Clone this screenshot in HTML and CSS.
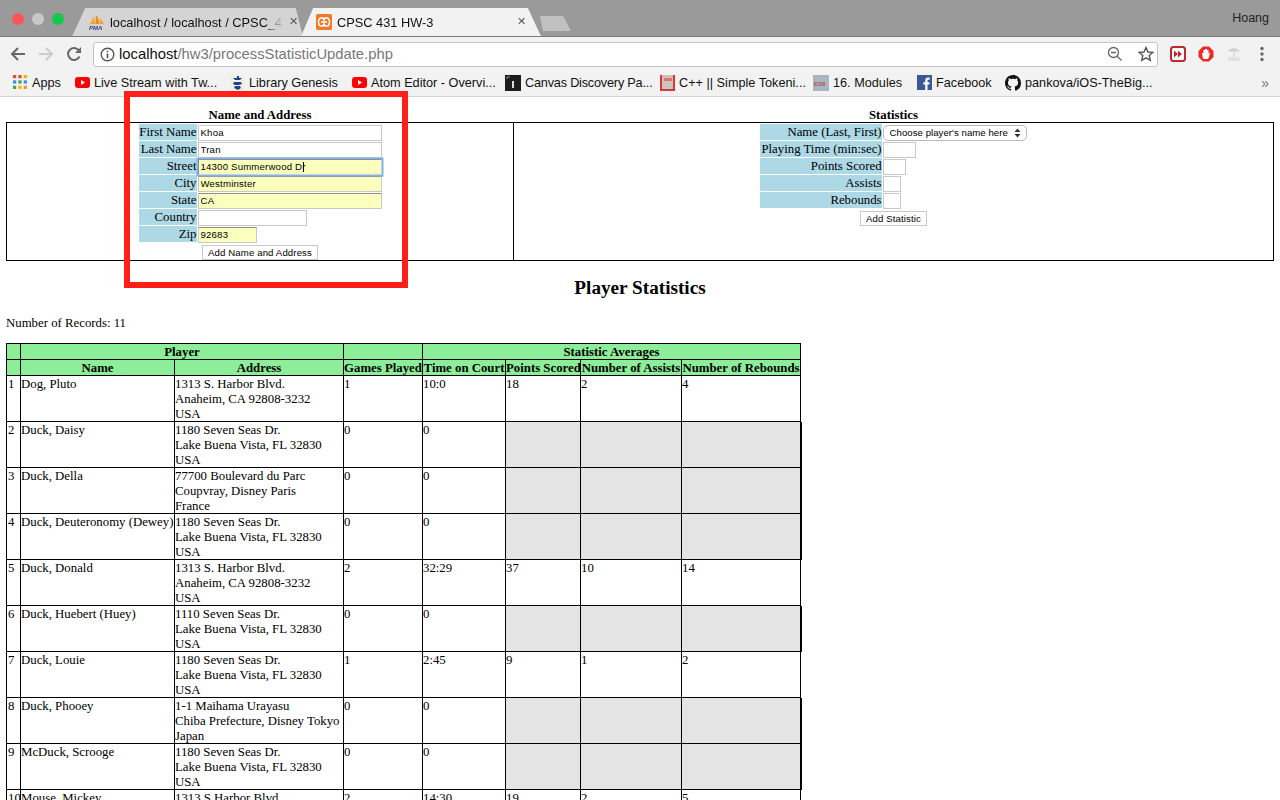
FILE: index.html
```html
<!doctype html>
<html lang="en">
    <head>
        <meta charset="UTF-8" />
        <title>CPSC 431 HW-3</title>
        <link rel="stylesheet" href="styles.css">
    </head>
    <body>
        <div class="app">
            <!-- browser tabs -->
            <div class="tabstrip">
                <div class="lights">
                    <span class="light red"></span>
                    <span class="light grey"></span>
                    <span class="light green"></span>
                </div>
                <div class="tab tab-back">
                    <span class="tab-bg"></span>
                    <svg class="tab-icon" width="16" height="17" viewBox="0 0 16 17">
                        <path d="M1 10 C3 7 4 4 5 2 L6 10Z" fill="#f6a623" />
                        <path d="M6.5 10 L7 1 C9 3 10 6 10.5 10Z" fill="#f08a1d" />
                        <path d="M11 10 C11 7 11 5 11 4 C13 6 14 8 15 10Z" fill="#f6a623" />
                        <text x="0" y="16" class="pma">PMA</text>
                    </svg>
                    <span class="tab-title fade">localhost / localhost / CPSC_43</span>
                    <span class="tab-close">✕</span>
                </div>
                <div class="tab tab-active">
                    <span class="tab-bg"></span>
                    <svg class="tab-icon" width="16" height="16" viewBox="0 0 16 16">
                        <rect width="16" height="16" rx="1.5" fill="#ee7b2c" />
                        <path d="M4 4 H7 L8 6 L9 4 H12 M4 12 H7 L8 10 L9 12 H12 M4 4 C2 6 2 10 4 12 M12 4 C14 6 14 10 12 12 M5 8 H11" fill="none" stroke="#fff" stroke-width="1.5" />
                    </svg>
                    <span class="tab-title">CPSC 431 HW-3</span>
                    <span class="tab-close">✕</span>
                </div>
                <div class="tab-new"></div>
                <span class="user">Hoang</span>
            </div>

            <!-- address bar -->
            <div class="toolbar">
                <svg class="tool" width="16" height="16" viewBox="0 0 16 16">
                    <path d="M15 8 H2 M8 2 L2 8 L8 14" fill="none" stroke="#666" stroke-width="2" />
                </svg>
                <svg class="tool" width="16" height="16" viewBox="0 0 16 16">
                    <path d="M1 8 H14 M8 2 L14 8 L8 14" fill="none" stroke="#ccc" stroke-width="2" />
                </svg>
                <svg class="tool" width="16" height="16" viewBox="0 0 16 16">
                    <path d="M13.5 10.5 A6 6 0 1 1 13 4.5" fill="none" stroke="#666" stroke-width="2" />
                    <path d="M15 1 V7 H9Z" fill="#666" />
                </svg>
                <div class="omnibox">
                    <svg width="15" height="15" viewBox="0 0 15 15">
                        <circle cx="7.5" cy="7.5" r="6.3" fill="none" stroke="#555" stroke-width="1.4" />
                        <path d="M7.5 6.5 V11.2 M7.5 3.8 V5.3" stroke="#555" stroke-width="1.6" />
                    </svg>
                    <span class="url"><b>localhost</b>/hw3/processStatisticUpdate.php</span>
                    <svg class="omni-zoom" width="16" height="16" viewBox="0 0 16 16">
                        <circle cx="6.5" cy="6.5" r="5" fill="none" stroke="#666" stroke-width="1.3" />
                        <path d="M10.2 10.2 L14.5 14.5 M4 6.5 H9" stroke="#666" stroke-width="1.3" />
                    </svg>
                    <svg class="omni-star" width="16" height="16" viewBox="0 0 16 16">
                        <path d="M8 1.5 L10 6 L14.8 6.4 L11.2 9.6 L12.3 14.4 L8 11.8 L3.7 14.4 L4.8 9.6 L1.2 6.4 L6 6Z" fill="none" stroke="#555" stroke-width="1.4" />
                    </svg>
                </div>
                <div class="extensions">
                    <svg width="16" height="16" viewBox="0 0 16 16">
                        <rect x="1" y="1" width="14" height="14" rx="2.5" fill="#fff" stroke="#c0282d" stroke-width="2" />
                        <path d="M4 4.5 L8 8 L4 11.5Z M8 4.5 L12 8 L8 11.5Z" fill="#c0282d" />
                    </svg>
                    <svg width="16" height="16" viewBox="0 0 16 16">
                        <path d="M5 0.5 H11 L15.5 5 V11 L11 15.5 H5 L0.5 11 V5Z" fill="#ee2a24" />
                        <path d="M5 13 L4 7 H5.5 V4 H7 V3 H9 V4 H10.5 V7.5 L12 6.5 L11 11 L10 13Z" fill="#fff" />
                    </svg>
                    <svg width="16" height="16" viewBox="0 0 16 16">
                        <path d="M2 6 C3 1 12 1 14 6 C12 5 11 5 10 6 C9 5 7 5 6 6 C5 5 4 5 2 6Z" fill="#cfcfcf" />
                        <path d="M8 6 V11" stroke="#d4d4d4" stroke-width="1.5" />
                        <rect x="2" y="11" width="12" height="4" fill="#e2e2e2" />
                    </svg>
                    <svg width="16" height="16" viewBox="0 0 16 16">
                        <circle cx="8" cy="2.5" r="1.7" fill="#666" />
                        <circle cx="8" cy="8" r="1.7" fill="#666" />
                        <circle cx="8" cy="13.5" r="1.7" fill="#666" />
                    </svg>
                </div>
            </div>

            <!-- bookmarks -->
            <div class="bookmarks">
                <a class="bm bm-apps">
                    <svg width="15" height="15" viewBox="0 0 14 14">
                        <rect x="0" y="0" width="3" height="3" fill="#e8453c" />
                        <rect x="5" y="0" width="3" height="3" fill="#e8453c" />
                        <rect x="10" y="0" width="3" height="3" fill="#f4b400" />
                        <rect x="0" y="5" width="3" height="3" fill="#4285f4" />
                        <rect x="5" y="5" width="3" height="3" fill="#34a853" />
                        <rect x="10" y="5" width="3" height="3" fill="#4285f4" />
                        <rect x="0" y="10" width="3" height="3" fill="#34a853" />
                        <rect x="5" y="10" width="3" height="3" fill="#f4b400" />
                        <rect x="10" y="10" width="3" height="3" fill="#f4902c" />
                    </svg>
                    Apps
                </a>
                <a class="bm bm-live">
                    <svg width="15" height="15" viewBox="0 0 15 15">
                        <rect x="0" y="2" width="15" height="11" rx="3" fill="#f00" />
                        <path d="M6 5 L10 7.5 L6 10Z" fill="#fff" />
                    </svg>
                    Live Stream with Tw...
                </a>
                <a class="bm bm-lib">
                    <svg width="15" height="16" viewBox="0 0 15 16">
                        <rect width="15" height="16" fill="#f1efe2" />
                        <path d="M7 1 H9 V3 H12 L10 5 H5 L3 3 H7Z M4 7 H11 L12 9 L9 10 H5 L3 9Z M5 11 H10 L11 13 L8 15 L4 13Z" fill="#23408e" />
                    </svg>
                    Library Genesis
                </a>
                <a class="bm bm-atom">
                    <svg width="15" height="15" viewBox="0 0 15 15">
                        <rect x="0" y="2" width="15" height="11" rx="3" fill="#f00" />
                        <path d="M6 5 L10 7.5 L6 10Z" fill="#fff" />
                    </svg>
                    Atom Editor - Overvi...
                </a>
                <a class="bm bm-canvas">
                    <svg width="16" height="16" viewBox="0 0 16 16">
                        <rect width="16" height="16" fill="#1c1c1c" />
                        <path d="M2 4 V2 H5" fill="none" stroke="#6a6" stroke-width="1" />
                        <rect x="7" y="6" width="2" height="7" fill="#ddd" />
                    </svg>
                    Canvas Discovery Pa...
                </a>
                <a class="bm bm-cpp">
                    <svg width="15" height="16" viewBox="0 0 15 16">
                        <rect width="15" height="16" fill="#c9c4b8" />
                        <rect width="2" height="16" fill="#d9363b" />
                        <rect x="13" width="2" height="16" fill="#d9363b" />
                        <rect y="14" width="15" height="2" fill="#d9363b" />
                        <rect x="4" y="3" width="8" height="3" fill="#ee6c6c" />
                    </svg>
                    C++ || Simple Tokeni...
                </a>
                <a class="bm bm-es">
                    <svg width="16" height="16" viewBox="0 0 16 16">
                        <rect width="16" height="16" fill="#a9b5c0" />
                        <text x="1" y="11" class="es">ES6</text>
                    </svg>
                    16. Modules
                </a>
                <a class="bm bm-fb">
                    <svg width="15" height="15" viewBox="0 0 15 15">
                        <rect width="15" height="15" fill="#3b5998" />
                        <path d="M10.5 15 V9.5 H12.3 L12.6 7.2 H10.5 V5.8 C10.5 5.1 10.8 4.7 11.6 4.7 H12.7 V2.7 C12.3 2.6 11.7 2.6 11 2.6 C9.300 2.6 8.200 3.600 8.200 5.500 V7.200 H6.300 V9.500 H8.200 V15Z" fill="#fff" />
                    </svg>
                    Facebook
                </a>
                <a class="bm bm-gh">
                    <svg width="16" height="16" viewBox="0 0 16 16">
                        <path fill="#111" d="M8 0C3.58 0 0 3.58 0 8c0 3.54 2.29 6.53 5.47 7.59.4.07.55-.17.55-.38 0-.19-.01-.82-.01-1.49-2.010.37-2.530-.49-2.690-.94-.09-.23-.48-.94-.82-1.130-.28-.15-.68-.52-.01-.53.63-.01 1.080.58 1.230.82.72 1.210 1.870.87 2.330.66.07-.52.28-.87.51-1.070-1.780-.2-3.640-.89-3.640-3.950 0-.87.31-1.590.82-2.150-.08-.2-.36-1.020.08-2.120 0 0 .67-.21 2.200.82.64-.18 1.320-.27 2-.27s1.360.09 2 .27c1.530-1.040 2.200-.82 2.200-.82.44 1.100.16 1.920.08 2.120.51.56.82 1.270.82 2.150 0 3.070-1.870 3.750-3.650 3.950.29.25.54.73.54 1.480 0 1.070-.01 1.930-.01 2.200 0 .21.15.46.55.38A8.013 8.013 0 0016 8c0-4.420-3.580-8-8-8z" />
                    </svg>
                    pankova/iOS-TheBig...
                </a>
                <span class="bm-more">»</span>
            </div>

            <!-- the page itself -->
            <div class="page">
                <table class="forms">
                    <colgroup>
                        <col class="forms-left" />
                        <col class="forms-right" />
                    </colgroup>
                    <tr>
                        <th>Name and Address</th>
                        <th>Statistics</th>
                    </tr>
                    <tr>
                        <td>
                            <table class="fields fields-name">
                                <tr>
                                    <td class="label">First Name</td>
                                    <td><input class="w-long" type="text" value="Khoa" /></td>
                                </tr>
                                <tr>
                                    <td class="label">Last Name</td>
                                    <td><input class="w-long" type="text" value="Tran" /></td>
                                </tr>
                                <tr>
                                    <td class="label">Street</td>
                                    <td>
                                        <div class="caret-wrap">
                                            <input class="w-long filled focused" type="text" value="14300 Summerwood Dr" />
                                            <span class="caret"></span>
                                        </div>
                                    </td>
                                </tr>
                                <tr>
                                    <td class="label">City</td>
                                    <td><input class="w-long filled" type="text" value="Westminster" /></td>
                                </tr>
                                <tr>
                                    <td class="label">State</td>
                                    <td><input class="w-long filled" type="text" value="CA" /></td>
                                </tr>
                                <tr>
                                    <td class="label">Country</td>
                                    <td><input class="w-mid" type="text" /></td>
                                </tr>
                                <tr>
                                    <td class="label">Zip</td>
                                    <td><input class="w-zip filled" type="text" value="92683" /></td>
                                </tr>
                                <tr>
                                    <td class="submit" colspan="2"><button type="button">Add Name and Address</button></td>
                                </tr>
                            </table>
                        </td>
                        <td>
                            <table class="fields">
                                <tr>
                                    <td class="label">Name (Last, First)</td>
                                    <td>
                                        <select>
                                            <option>Choose player's name here</option>
                                        </select>
                                    </td>
                                </tr>
                                <tr>
                                    <td class="label">Playing Time (min:sec)</td>
                                    <td><input class="w-time" type="text" /></td>
                                </tr>
                                <tr>
                                    <td class="label">Points Scored</td>
                                    <td><input class="w-points" type="text" /></td>
                                </tr>
                                <tr>
                                    <td class="label">Assists</td>
                                    <td><input class="w-small" type="text" /></td>
                                </tr>
                                <tr>
                                    <td class="label">Rebounds</td>
                                    <td><input class="w-small" type="text" /></td>
                                </tr>
                                <tr>
                                    <td class="submit" colspan="2"><button type="button">Add Statistic</button></td>
                                </tr>
                            </table>
                        </td>
                    </tr>
                </table>

                <h2>Player Statistics</h2>
                <p class="count">Number of Records: 11</p>

                <table class="players">
                    <colgroup>
                        <col class="c-num" />
                        <col class="c-name" />
                        <col class="c-addr" />
                        <col class="c-games" />
                        <col class="c-time" />
                        <col class="c-points" />
                        <col class="c-assists" />
                        <col class="c-rebounds" />
                    </colgroup>
                    <thead>
                        <tr>
                            <th></th>
                            <th colspan="2">Player</th>
                            <th></th>
                            <th colspan="4">Statistic Averages</th>
                        </tr>
                        <tr>
                            <th></th>
                            <th>Name</th>
                            <th>Address</th>
                            <th>Games Played</th>
                            <th>Time on Court</th>
                            <th>Points Scored</th>
                            <th>Number of Assists</th>
                            <th>Number of Rebounds</th>
                        </tr>
                    </thead>
                    <tbody>
                        <tr>
                            <td>1</td>
                            <td>Dog, Pluto</td>
                            <td>1313 S. Harbor Blvd.<br />Anaheim, CA 92808-3232<br />USA</td>
                            <td>1</td>
                            <td>10:0</td>
                            <td>18</td>
                            <td>2</td>
                            <td>4</td>
                        </tr>
                        <tr>
                            <td>2</td>
                            <td>Duck, Daisy</td>
                            <td>1180 Seven Seas Dr.<br />Lake Buena Vista, FL 32830<br />USA</td>
                            <td>0</td>
                            <td>0</td>
                            <td class="empty"></td>
                            <td class="empty"></td>
                            <td class="empty"></td>
                        </tr>
                        <tr>
                            <td>3</td>
                            <td>Duck, Della</td>
                            <td>77700 Boulevard du Parc<br />Coupvray, Disney Paris<br />France</td>
                            <td>0</td>
                            <td>0</td>
                            <td class="empty"></td>
                            <td class="empty"></td>
                            <td class="empty"></td>
                        </tr>
                        <tr>
                            <td>4</td>
                            <td>Duck, Deuteronomy (Dewey)</td>
                            <td>1180 Seven Seas Dr.<br />Lake Buena Vista, FL 32830<br />USA</td>
                            <td>0</td>
                            <td>0</td>
                            <td class="empty"></td>
                            <td class="empty"></td>
                            <td class="empty"></td>
                        </tr>
                        <tr>
                            <td>5</td>
                            <td>Duck, Donald</td>
                            <td>1313 S. Harbor Blvd.<br />Anaheim, CA 92808-3232<br />USA</td>
                            <td>2</td>
                            <td>32:29</td>
                            <td>37</td>
                            <td>10</td>
                            <td>14</td>
                        </tr>
                        <tr>
                            <td>6</td>
                            <td>Duck, Huebert (Huey)</td>
                            <td>1110 Seven Seas Dr.<br />Lake Buena Vista, FL 32830<br />USA</td>
                            <td>0</td>
                            <td>0</td>
                            <td class="empty"></td>
                            <td class="empty"></td>
                            <td class="empty"></td>
                        </tr>
                        <tr>
                            <td>7</td>
                            <td>Duck, Louie</td>
                            <td>1180 Seven Seas Dr.<br />Lake Buena Vista, FL 32830<br />USA</td>
                            <td>1</td>
                            <td>2:45</td>
                            <td>9</td>
                            <td>1</td>
                            <td>2</td>
                        </tr>
                        <tr>
                            <td>8</td>
                            <td>Duck, Phooey</td>
                            <td>1-1 Maihama Urayasu<br />Chiba Prefecture, Disney Tokyo<br />Japan</td>
                            <td>0</td>
                            <td>0</td>
                            <td class="empty"></td>
                            <td class="empty"></td>
                            <td class="empty"></td>
                        </tr>
                        <tr>
                            <td>9</td>
                            <td>McDuck, Scrooge</td>
                            <td>1180 Seven Seas Dr.<br />Lake Buena Vista, FL 32830<br />USA</td>
                            <td>0</td>
                            <td>0</td>
                            <td class="empty"></td>
                            <td class="empty"></td>
                            <td class="empty"></td>
                        </tr>
                        <tr>
                            <td>10</td>
                            <td>Mouse, Mickey</td>
                            <td>1313 S Harbor Blvd.<br />Anaheim, CA 92808-3232<br />USA</td>
                            <td>2</td>
                            <td>14:30</td>
                            <td>19</td>
                            <td>2</td>
                            <td>5</td>
                        </tr>
                    </tbody>
                </table>
            </div>

            <div class="highlight"></div>
        </div>
    </body>
</html>
```

FILE: styles.css
```css
html,
body {
    margin: 0;
    overflow: hidden;
}
.app {
    position: relative;
    height: 800px;
    overflow: hidden;
    display: flex;
    flex-direction: column;
    font-family: "Liberation Sans", Arial, sans-serif;
    color: #111;
}

/* tabs */
.tabstrip {
    flex: none;
    height: 36px;
    display: flex;
    align-items: flex-end;
    background-color: #9a9a9a;
    border-bottom: 1px solid #7c7c7c;
    padding-left: 12px;
}
.lights {
    display: flex;
    gap: 8px;
    align-self: flex-start;
    margin-top: 13px;
    width: 60px;
}
.light {
    width: 12px;
    height: 12px;
    border-radius: 50%;
}
.red {
    background-color: #f9565a;
}
.grey {
    background-color: #c8c8c8;
}
.green {
    background-color: #12c94f;
}
.tab {
    position: relative;
    height: 28px;
    display: flex;
    align-items: center;
    font-size: 12.8px;
    filter: drop-shadow(0 0 0.6px #555);
}
.tab-bg {
    position: absolute;
    inset: 0;
}
.tab-back {
    width: 231px;
    padding-left: 17px;
    box-sizing: border-box;
}
.tab-back .tab-bg {
    background-color: #d4d4d4;
    clip-path: polygon(0 100%, 13px 0, calc(100% - 7px) 0, 100% 100%);
}
.tab-active {
    width: 240px;
    margin-left: -2px;
    padding-left: 15px;
    box-sizing: border-box;
}
.tab-active .tab-bg {
    background-color: #f2f2f2;
    clip-path: polygon(0 100%, 12px 0, calc(100% - 13px) 0, 100% 100%);
}
.tab-icon {
    position: relative;
    flex: none;
}
.pma {
    font-size: 6px;
    font-weight: bold;
    font-style: italic;
    fill: #33437f;
}
.tab-title {
    position: relative;
    margin-left: 5px;
    white-space: nowrap;
}
.fade {
    -webkit-mask-image: linear-gradient(to right, #000 86%, transparent 97%);
    mask-image: linear-gradient(to right, #000 86%, transparent 97%);
}
.tab-close {
    position: absolute;
    top: 7px;
    right: 15px;
    font-size: 11px;
    color: #555;
}
.tab-back .tab-close {
    right: 5px;
}
.tab-new {
    width: 31px;
    height: 15px;
    margin-left: -1px;
    margin-bottom: 5px;
    background-color: #c0c0c0;
    clip-path: polygon(3px 100%, 0 0, calc(100% - 8px) 0, 100% 100%);
}
.user {
    margin-left: auto;
    margin-right: 11px;
    align-self: center;
    font-size: 12.5px;
    color: #222;
}

/* address bar */
.toolbar {
    flex: none;
    height: 30px;
    padding: 2px 0 0 10px;
    display: flex;
    align-items: center;
    background-color: #f2f2f2;
}
.tool {
    margin-right: 12px;
    flex: none;
}
.omnibox {
    width: 1065px;
    height: 25px;
    margin-left: -1px;
    display: flex;
    align-items: center;
    gap: 4px;
    padding-left: 6px;
    box-sizing: border-box;
    background-color: #fff;
    border: 1px solid #c4c4c4;
    border-radius: 3px;
}
.url {
    font-size: 14.8px;
    color: #777;
    white-space: nowrap;
}
.url b {
    font-weight: normal;
    color: #111;
}
.omni-zoom {
    margin-left: auto;
}
.omni-star {
    margin: 0 3px 0 11px;
}
.extensions {
    display: flex;
    gap: 12px;
    margin-left: 12px;
}

/* bookmarks */
.bookmarks {
    flex: none;
    height: 27px;
    display: flex;
    align-items: center;
    background-color: #f2f2f2;
    border-bottom: 1px solid #d2d2d2;
    font-size: 12.7px;
    padding-left: 13px;
}
.bm {
    display: flex;
    align-items: center;
    gap: 4px;
    white-space: nowrap;
    flex: none;
}
.bm-apps { width: 62px; }
.bm-live { width: 155px; }
.bm-lib { width: 122px; }
.bm-atom { width: 153px; }
.bm-canvas { width: 155px; letter-spacing: -0.2px; }
.bm-cpp { width: 153px; }
.bm-es { width: 104px; }
.bm-fb { width: 88px; }
.bm-gh { width: 150px; }
.es {
    font-size: 6px;
    font-weight: bold;
    fill: #b5534a;
}
.bm-more {
    margin-left: auto;
    margin-right: 11px;
    font-size: 14px;
    color: #777;
}

/* page */
.page {
    flex: 1;
    padding: 6px 6px 0;
    font-family: "Liberation Serif", "Times New Roman", serif;
    font-size: 12.8px;
    line-height: 15px;
    color: #000;
    background-color: #fff;
}
table {
    font-size: inherit;
}
.forms {
    width: 1267px;
    table-layout: fixed;
    border-collapse: collapse;
}
.forms-left {
    width: 507px;
}
.forms-right {
    width: 760px;
}
.forms > tbody > tr > th {
    padding: 6px 0 0;
    line-height: 13px;
}
.forms > tbody > tr > td {
    border: 1px solid #000;
    padding: 0;
    height: 135px;
    vertical-align: top;
}
.fields {
    margin: 0 auto -1px;
    border-collapse: separate;
    border-spacing: 1px;
}
.fields td {
    padding: 0;
    height: 16px;
    vertical-align: top;
}
.fields .label {
    height: 15px;
    padding: 1px 0 0 1px;
    background-color: #add8e6;
    text-align: right;
}
.fields-name .label {
    width: 58px;
    padding-left: 0;
}
.fields .submit {
    height: auto;
    padding-top: 2px;
}
input {
    display: block;
    height: 16px;
    box-sizing: border-box;
    padding: 0 1px 1px 2px;
    margin: 1px 0 -1px;
    font-family: "Liberation Sans", Arial, sans-serif;
    font-size: 9.6px;
    letter-spacing: 0.2px;
    color: #000;
    background-color: #fff;
    border: 1px solid #c9c9c9;
    border-radius: 0;
    outline: none;
}
.w-long { width: 184px; }
.w-mid { width: 109px; }
.w-zip { width: 59px; }
.w-time { width: 33px; }
.w-points { width: 23px; }
.w-small { width: 18px; }
.filled {
    background-color: #faffbd;
    border-top-color: #8f8f8f;
}
.focused {
    box-shadow: 0 0 0 1.5px #7db4f0;
    border-color: #8f8f8f #d0d0d0 #d0d0d0 #8f8f8f;
}
.caret-wrap {
    position: relative;
}
.caret {
    position: absolute;
    left: 105px;
    top: 3px;
    width: 1px;
    height: 10px;
    background-color: #000;
}
select {
    display: block;
    width: 144px;
    height: 16px;
    margin: 1px 0 -1px;
    padding: 0 0 1px 6px;
    font-family: "Liberation Sans", Arial, sans-serif;
    font-size: 9.6px;
    letter-spacing: 0.05px;
    color: #000;
    background-color: #fff;
    background-image: url("data:image/svg+xml,%3Csvg xmlns='http://www.w3.org/2000/svg' width='7' height='10'%3E%3Cpath d='M3.500 0.500 L6.500 4 H0.500Z M3.500 9.500 L6.500 6 H0.500Z' fill='%23333'/%3E%3C/svg%3E");
    background-repeat: no-repeat;
    background-position: right 5px center;
    border: 1px solid #b8b8b8;
    border-radius: 5px;
    appearance: none;
    -webkit-appearance: none;
}
button {
    display: block;
    margin: 0 auto;
    padding: 0 5px;
    height: 15px;
    font-family: "Liberation Sans", Arial, sans-serif;
    font-size: 9.6px;
    letter-spacing: 0.13px;
    line-height: 12px;
    color: #000;
    background-color: #fff;
    border: 1px solid #c9c9c9;
    border-radius: 0;
}
h2 {
    margin: 16px 0 0;
    font-size: 19.2px;
    line-height: 22px;
    text-align: center;
}
.count {
    margin: 17px 0 12px;
}
.players {
    width: 794px;
    table-layout: fixed;
    border-collapse: collapse;
}
.c-num { width: 14px; }
.c-name { width: 154px; }
.c-addr { width: 169px; }
.c-games { width: 79px; }
.c-time { width: 83px; }
.c-points { width: 75px; }
.c-assists { width: 101px; }
.c-rebounds { width: 119px; }
.players th,
.players td {
    border: 1px solid #000;
    padding: 1px 0 0;
    vertical-align: top;
    white-space: nowrap;
}
.players td:first-child {
    padding-left: 1px;
}
.players th {
    height: 14px;
    background-color: #8cee98;
    text-align: center;
}
.players td {
    height: 44px;
}
/* the text sits 1px low in its cell without making the row taller */
.players th::after,
.players td::after {
    content: "";
    display: block;
    margin-top: -1px;
}
.players .empty {
    background-color: #e4e4e4;
}
.players .empty:last-child {
    box-shadow: 1px 0 0 #000;
}

/* red marker drawn over the screenshot */
.highlight {
    position: absolute;
    left: 124px;
    top: 91px;
    width: 284px;
    height: 197px;
    box-sizing: border-box;
    border: 6px solid #ff2019;
}
```
